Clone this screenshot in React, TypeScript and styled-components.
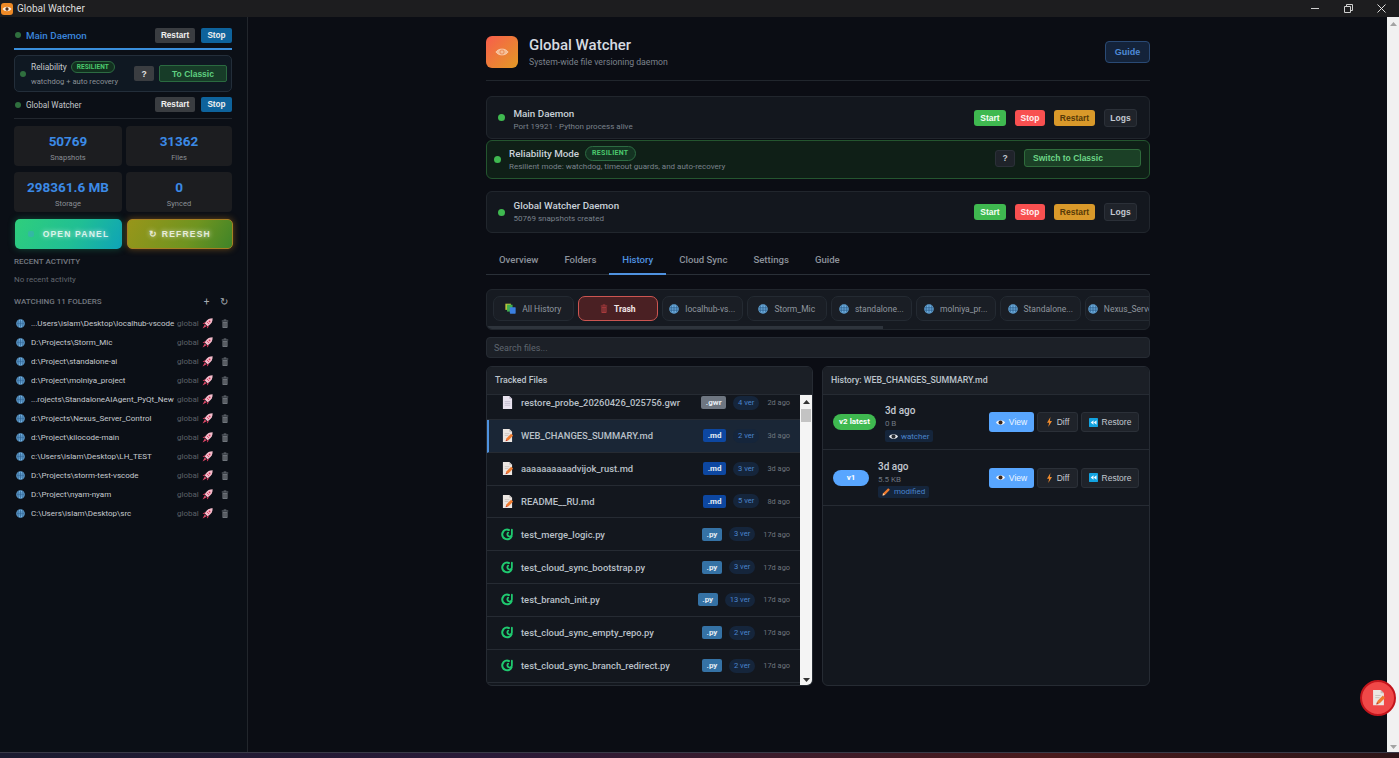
import React from 'react';
import styled, { createGlobalStyle } from 'styled-components';

const UI_FONT = 'Roboto, "Noto Sans", Arial, sans-serif';
const BTN_FONT = '"Liberation Sans", Arial, sans-serif';

const GlobalStyle = createGlobalStyle`
  html, body, #root { margin: 0; height: 100%; }
  body { overflow: hidden; background: #0b0e14; font-family: ${UI_FONT}; color: #c9d1d9; }
  * { box-sizing: border-box; }
`;

const Shell = styled.div`
  height: 758px;
  display: flex;
  flex-direction: column;
`;

const TitleBar = styled.div`
  height: 17px;
  flex: none;
  display: flex;
  align-items: center;
  background: #1d1d1f;
  padding-left: 1px;
`;

const TitleText = styled.span`
  margin-left: 4px;
  font-size: 10px;
  color: #dcdcdc;
`;

const WindowControls = styled.div`
  margin-left: auto;
  margin-right: 2px;
  display: flex;
  align-items: center;
  gap: 1px;
`;

const WindowControl = styled.div`
  width: 32px;
  height: 17px;
  display: flex;
  align-items: center;
  justify-content: center;
`;

const Body = styled.div`
  flex: 1;
  min-height: 0;
  display: flex;
`;

const Sidebar = styled.aside`
  width: 248px;
  flex: none;
  padding: 11px 15px 0 14px;
  background: #0b0f16;
  border-right: 1px solid #22262c;
`;

const DaemonRow = styled.div<{ $active?: boolean }>`
  display: flex;
  align-items: center;
  height: 22px;
  padding-bottom: 6px;
  border-bottom: ${(p) => (p.$active ? '2px solid #3a8fdc' : '1px solid #22272e')};
  margin-bottom: ${(p) => (p.$active ? '5px' : '7px')};
`;

const MiniDot = styled.span`
  width: 6px;
  height: 6px;
  margin-right: 5px;
  margin-left: 1px;
  border-radius: 50%;
  background: #2f6f3e;
  flex: none;
`;

const DaemonName = styled.span<{ $active?: boolean }>`
  padding-top: 1px;
  font-size: ${(p) => (p.$active ? '9.8px' : '8.2px')};
  font-weight: ${(p) => (p.$active ? 500 : 400)};
  color: ${(p) => (p.$active ? '#3a86dd' : '#c4c8cc')};
  margin-right: auto;
`;

const MiniButton = styled.button<{ $primary?: boolean }>`
  height: 15px;
  padding: 0;
  width: ${(p) => (p.$primary ? '31px' : '40px')};
  margin-left: 6px;
  border: none;
  border-radius: 2px;
  background: ${(p) => (p.$primary ? '#0e639c' : '#3a3d41')};
  color: #f0f0f0;
  font: 700 8.2px ${BTN_FONT};
`;

const ReliabilityBox = styled.div`
  height: 37px;
  display: flex;
  align-items: center;
  padding: 0 5px;
  margin-bottom: 5px;
  border: 1px solid #232e3a;
  border-radius: 5px;
  background: #0f1822;
`;

const ReliabilityDot = styled(MiniDot)`
  margin-right: 5px;
  margin-left: 0;
`;

const ReliabilityText = styled.div`
  width: 103px;
  flex: none;
`;

const ReliabilityTitle = styled.div`
  display: flex;
  align-items: center;
  gap: 4px;
  font-size: 8.4px;
  line-height: 13px;
  color: #c4c8cc;
`;

const SmallNote = styled.div`
  margin-top: 2px;
  font-size: 7.6px;
  line-height: 11px;
  color: #8b9097;
  white-space: nowrap;
`;

const TinyPill = styled.span`
  padding: 0 5px;
  height: 12px;
  line-height: 10px;
  border: 1px solid #2c6b42;
  border-radius: 6px;
  background: #12301f;
  color: #4cc96e;
  font-size: 6.5px;
  font-weight: 700;
  letter-spacing: 0.1px;
`;

const HelpMini = styled.button`
  width: 20px;
  height: 15px;
  flex: none;
  padding: 0;
  border: none;
  border-radius: 2px;
  background: #3a3d41;
  color: #e4e4e4;
  font: 700 8.5px ${BTN_FONT};
`;

const ClassicMini = styled.button`
  width: 68px;
  height: 17px;
  flex: none;
  margin-left: 5px;
  padding: 0;
  border: 1px solid #2a6a40;
  border-radius: 2px;
  background: #173c28;
  color: #5fcf80;
  font: 700 8.5px ${BTN_FONT};
`;

const StatGrid = styled.div`
  display: grid;
  grid-template-columns: 108px 106px;
  gap: 6px 4px;
`;

const StatCard = styled.div`
  height: 40px;
  border-radius: 4px;
  background: #1c1d20;
  text-align: center;
  padding-top: 6px;
`;

const StatValue = styled.div`
  font-size: 13.5px;
  line-height: 18px;
  font-weight: 700;
  color: #3b8ae6;
`;

const StatLabel = styled.div`
  font-size: 7.5px;
  line-height: 11px;
  margin-top: 2px;
  color: #8a8e94;
`;

const ActionGrid = styled.div`
  display: grid;
  grid-template-columns: 107px 106px;
  gap: 5px;
  margin: 7px 0 0 1px;
`;

const ActionButton = styled.button<{ $tone: 'open' | 'refresh' }>`
  height: 30px;
  padding: 0;
  display: flex;
  align-items: center;
  justify-content: center;
  gap: 5px;
  border-radius: 5px;
  border: ${(p) => (p.$tone === 'refresh' ? '1px solid #a87f22' : 'none')};
  background: ${(p) =>
    p.$tone === 'open'
      ? 'linear-gradient(120deg, #2fce7c 0%, #20bf94 55%, #0ea3b8 100%)'
      : 'linear-gradient(120deg, #98961a 0%, #6f9420 60%, #3f8428 100%)'};
  box-shadow: ${(p) =>
    p.$tone === 'open' ? '0 0 7px rgba(30, 190, 120, 0.35)' : '0 0 7px rgba(220, 140, 30, 0.45)'};
  color: rgba(255, 255, 255, 0.8);
  font: 700 8.5px ${BTN_FONT};
  letter-spacing: 1.2px;
  text-shadow: 0 0 5px rgba(255, 255, 255, 0.75);
`;

const GhostGlyph = styled.span`
  width: 6px;
  height: 6px;
  border-radius: 2px;
  background: rgba(60, 170, 190, 0.55);
  margin-right: 4px;
`;

const SectionLabel = styled.div`
  margin-top: 7px;
  font-size: 8px;
  line-height: 12px;
  font-weight: 500;
  color: #737880;
`;

const EmptyNote = styled.div`
  margin-top: 6px;
  font-size: 8px;
  line-height: 12px;
  color: #62676e;
`;

const WatchHeader = styled.div`
  display: flex;
  align-items: center;
  margin-top: 10px;
  margin-bottom: 6px;
  height: 12px;
`;

const WatchTitle = styled(SectionLabel)`
  margin: 0 auto 0 0;
`;

const WatchAction = styled.span`
  width: 17px;
  text-align: center;
  font-size: 10px;
  line-height: 12px;
  color: #a6abb1;
`;

const FolderRow = styled.div`
  height: 19px;
  display: flex;
  align-items: center;
  padding-left: 2px;
`;

const FolderPath = styled.span`
  width: 146px;
  flex: none;
  margin-left: 6px;
  font-size: 8px;
  color: #c6cacf;
  white-space: nowrap;
  overflow: hidden;
`;

const FolderScope = styled.span`
  width: 20px;
  flex: none;
  font-size: 8px;
  color: #5c6168;
`;

const FolderAction = styled.span<{ $width: number }>`
  width: ${(p) => p.$width}px;
  flex: none;
  display: flex;
  justify-content: center;
`;

const Main = styled.main`
  flex: 1;
  min-width: 0;
  display: flex;
  justify-content: center;
  padding-top: 19px;
  background: #0b0d14;
`;

const Content = styled.div`
  width: 664px;
  margin-left: 1px;
`;

const Header = styled.header`
  display: flex;
  align-items: center;
  height: 45px;
  padding-bottom: 13px;
  border-bottom: 1px solid #21262d;
  margin-bottom: 15px;
`;

const LogoTile = styled.div`
  width: 32px;
  height: 32px;
  display: flex;
  align-items: center;
  justify-content: center;
  border-radius: 6px;
  background: linear-gradient(135deg, #f85d4c 0%, #e39a25 100%);
`;

const HeaderText = styled.div`
  margin-left: 11px;
  margin-right: auto;
`;

const PageTitle = styled.h1`
  margin: 0;
  font-size: 15px;
  line-height: 20px;
  font-weight: 500;
  color: #d6dae0;
`;

const PageSubtitle = styled.p`
  margin: 1px 0 0;
  font-size: 8.7px;
  line-height: 12px;
  color: #7b828c;
`;

const GuideButton = styled.button`
  width: 45px;
  height: 22px;
  padding: 0;
  border: 1px solid #2a4a75;
  border-radius: 4px;
  background: #14233a;
  color: #4f8ad6;
  font: 700 9px ${BTN_FONT};
`;

const StatusCard = styled.section<{ $height: number; $resilient?: boolean; $gap: number }>`
  height: ${(p) => p.$height}px;
  margin-bottom: ${(p) => p.$gap}px;
  display: flex;
  align-items: center;
  padding: 0 ${(p) => (p.$resilient ? '8px' : '12px')} 0 ${(p) => (p.$resilient ? '7px' : '11px')};
  border: 1px solid ${(p) => (p.$resilient ? '#24552f' : '#21262d')};
  border-radius: 6px;
  background: ${(p) => (p.$resilient ? '#0f1f17' : '#13171e')};
`;

const StatusDot = styled.span`
  width: 7px;
  height: 7px;
  flex: none;
  border-radius: 50%;
  background: #3fb950;
`;

const StatusText = styled.div<{ $resilient?: boolean; $nudge?: number }>`
  margin-left: ${(p) => (p.$resilient ? '8px' : '8.5px')};
  margin-right: auto;
  margin-top: ${(p) => p.$nudge ?? 0}px;
`;

const StatusName = styled.div`
  display: flex;
  align-items: center;
  gap: 6px;
  height: 13px;
  font-size: 9.8px;
  line-height: 13px;
  font-weight: 500;
  color: #c9d1d9;
`;

const StatusNote = styled.div`
  margin-top: 1px;
  font-size: 8px;
  line-height: 11px;
  color: #7a828c;
`;

const ModePill = styled.span`
  height: 15px;
  padding: 0 6px;
  line-height: 13px;
  border: 1px solid #2c6b42;
  border-radius: 8px;
  background: #143322;
  color: #4cc96e;
  font-size: 7px;
  font-weight: 700;
  letter-spacing: 0.3px;
`;

const ControlButton = styled.button<{ $kind: 'start' | 'stop' | 'restart' | 'logs' }>`
  height: ${(p) => (p.$kind === 'logs' ? '18px' : '16px')};
  width: ${(p) => ({ start: 32, stop: 30, restart: 41, logs: 33 }[p.$kind])}px;
  margin-left: 9px;
  padding: 0;
  border-radius: 3px;
  border: ${(p) => (p.$kind === 'logs' ? '1px solid #2b3038' : 'none')};
  background: ${(p) => ({ start: '#3fb950', stop: '#f85050', restart: '#d9992a', logs: '#1f232a' }[p.$kind])};
  color: ${(p) => ({ start: '#f4fff6', stop: '#fff0f0', restart: '#573a08', logs: '#c3c9d1' }[p.$kind])};
  font: 700 8.5px ${BTN_FONT};
`;

const HelpButton = styled.button`
  width: 20px;
  height: 17px;
  margin-right: 9px;
  margin-bottom: 3px;
  padding: 0;
  border: 1px solid #2b3038;
  border-radius: 3px;
  background: #1f232a;
  color: #c3c9d1;
  font: 700 8.5px ${BTN_FONT};
`;

const SwitchButton = styled.button`
  width: 117px;
  height: 18px;
  margin-bottom: 3px;
  padding: 0 0 0 8px;
  text-align: left;
  border: 1px solid #2f6b3c;
  border-radius: 3px;
  background: #1b4026;
  color: #6dd587;
  font: 700 8.5px ${BTN_FONT};
`;

const TabBar = styled.nav`
  display: flex;
  height: 30px;
  margin-bottom: 14px;
  border-bottom: 1px solid #2a3038;
`;

const Tab = styled.div<{ $active?: boolean }>`
  height: 30px;
  padding: 0 13px;
  line-height: 29px;
  font-size: 9.6px;
  font-weight: 500;
  color: ${(p) => (p.$active ? '#4f92e0' : '#8b929b')};
  border-bottom: 2px solid ${(p) => (p.$active ? '#4f92e0' : 'transparent')};
`;

const ChipPanel = styled.div`
  height: 41px;
  padding-top: 6px;
  display: flex;
  flex-direction: column;
  border: 1px solid #21262d;
  border-radius: 6px;
  background: #161a21;
  overflow: hidden;
`;

const ChipRow = styled.div`
  display: flex;
  gap: 4px;
  padding-left: 6px;
  height: 25px;
`;

const Chip = styled.div<{ $danger?: boolean }>`
  width: 80.5px;
  height: 25px;
  flex: none;
  display: flex;
  align-items: center;
  justify-content: center;
  gap: 6px;
  font-size: 8.5px;
  white-space: nowrap;
  font-weight: ${(p) => (p.$danger ? 700 : 400)};
  color: ${(p) => (p.$danger ? '#f0e6e6' : '#8f969f')};
  border: ${(p) => (p.$danger ? '1.5px solid #cc5551' : '1px solid #242a32')};
  border-radius: 7px;
  background: ${(p) => (p.$danger ? '#4a2023' : '#1a1e25')};
`;

const ChipScrollThumb = styled.div`
  width: 396px;
  height: 3px;
  margin-top: auto;
  background: #2e343c;
`;

const SearchInput = styled.input`
  display: block;
  width: 100%;
  height: 21px;
  margin: 7px 0 8px;
  padding: 0 7px;
  border: 1px solid #262b33;
  border-radius: 4px;
  background: #1c2027;
  color: #c9d1d9;
  font: 400 9px ${UI_FONT};
  &::placeholder { color: #5f666f; }
`;

const Panels = styled.div`
  display: grid;
  grid-template-columns: 327px 328px;
  gap: 9px;
  height: 320px;
`;

const Panel = styled.section`
  display: flex;
  flex-direction: column;
  min-height: 0;
  border: 1px solid #262b33;
  border-radius: 6px;
  background: #13171e;
  overflow: hidden;
`;

const PanelHeader = styled.div`
  height: 28px;
  flex: none;
  padding-left: 8px;
  line-height: 27px;
  font-size: 8.8px;
  font-weight: 500;
  color: #bcc3cb;
  background: #1b1f26;
  border-bottom: 1px solid #262b33;
`;

const PanelBody = styled.div`
  flex: 1;
  min-height: 0;
  display: flex;
`;

const FileList = styled.div`
  flex: 1;
  min-width: 0;
  overflow: hidden;
`;

const FileItem = styled.div<{ $selected?: boolean; $first?: boolean }>`
  height: 32.85px;
  margin-top: ${(p) => (p.$first ? '-8px' : '0')};
  display: flex;
  align-items: center;
  padding: 0 10px 0 ${(p) => (p.$selected ? '12px' : '14px')};
  border-left: ${(p) => (p.$selected ? '2px solid #4f92e0' : 'none')};
  border-bottom: 1px solid #262b33;
  background: ${(p) => (p.$selected ? '#1a2636' : 'transparent')};
`;

const FileIconSlot = styled.span`
  width: 12px;
  flex: none;
  display: flex;
  justify-content: center;
`;

const FileName = styled.span`
  margin-left: 8px;
  margin-right: auto;
  font-size: 9.4px;
  font-weight: 500;
  color: #b9c0c8;
  white-space: nowrap;
`;

const ExtBadge = styled.span<{ $ext: string }>`
  height: 13px;
  padding: 0 4.5px;
  line-height: 13px;
  border-radius: 2px;
  font-size: 8px;
  font-weight: 700;
  color: #e6edf3;
  background: ${(p) => (p.$ext === '.gwr' ? '#6e7681' : p.$ext === '.md' ? '#0d47a1' : '#3572a5')};
`;

const VersionPill = styled.span`
  height: 14px;
  margin-left: 7px;
  padding: 0 5px;
  line-height: 14px;
  border-radius: 7px;
  font-size: 7.6px;
  color: #4a84cc;
  background: #15253b;
`;

const FileTime = styled.span`
  margin-left: 8px;
  font-size: 7.4px;
  color: #6f767f;
  white-space: nowrap;
`;

const FakeScrollbar = styled.div<{ $page?: boolean }>`
  width: 12px;
  flex: none;
  display: flex;
  flex-direction: column;
  align-items: center;
  justify-content: space-between;
  background: ${(p) => (p.$page ? '#f1f1f1' : '#f4f4f4')};
  padding: 5px 0 3px;
`;

const ScrollThumb = styled.div`
  width: 10px;
  height: 13px;
  margin-top: 5px;
  margin-bottom: auto;
  background: #c3c3c3;
`;

const VersionRow = styled.div<{ $tall?: boolean }>`
  height: ${(p) => (p.$tall ? 56 : 55)}px;
  display: flex;
  align-items: center;
  padding: 0 10px;
  border-bottom: 1px solid #262b33;
`;

const VersionTag = styled.span<{ $latest?: boolean }>`
  height: 16px;
  padding: 0 6px;
  min-width: 36px;
  line-height: 16px;
  text-align: center;
  flex: none;
  border-radius: 8px;
  font-size: 8px;
  font-weight: 700;
  color: #fff;
  background: ${(p) => (p.$latest ? '#3fb950' : '#58a6ff')};
`;

const VersionMeta = styled.div`
  margin: 2px auto 0 9px;
`;

const VersionTime = styled.div`
  font-size: 10px;
  line-height: 13px;
  font-weight: 500;
  color: #c3c9d1;
`;

const VersionSize = styled.div`
  font-size: 8px;
  line-height: 11px;
  margin-top: 1px;
  color: #6e7681;
`;

const SourceTag = styled.span`
  display: flex;
  width: fit-content;
  align-items: center;
  gap: 3px;
  height: 12px;
  margin-top: 1px;
  padding: 0 4px;
  border-radius: 2px;
  font-size: 8px;
  color: #4a84cc;
  background: #15253b;
`;

const VersionButton = styled.button<{ $primary?: boolean; $width: number }>`
  width: ${(p) => p.$width}px;
  height: 20px;
  margin-left: 3px;
  padding: 0;
  display: inline-flex;
  align-items: center;
  justify-content: center;
  gap: 4px;
  border: ${(p) => (p.$primary ? 'none' : '1px solid #2b3038')};
  border-radius: 3px;
  background: ${(p) => (p.$primary ? '#58a6ff' : '#1f232a')};
  color: ${(p) => (p.$primary ? '#eef6ff' : '#c3c9d1')};
  font: 400 8.5px ${BTN_FONT};
`;

const FloatingButton = styled.button`
  position: absolute;
  left: 1360px;
  top: 680px;
  width: 36px;
  height: 36px;
  padding: 0;
  display: flex;
  align-items: center;
  justify-content: center;
  border: 2px solid #c3151c;
  border-radius: 50%;
  background: #f04848;
`;

const DesktopStrip = styled.div`
  height: 6px;
  flex: none;
  background: linear-gradient(90deg, #1b1b30 0%, #2a1a38 35%, #3c1c2c 55%, #4a1a1c 75%, #2d1518 100%);
  border-top: 1px solid #3a3a48;
`;

const GlobeIcon = ({ size = 9 }: { size?: number }) => (
  <svg width={size} height={size} viewBox="0 0 16 16" style={{ flex: 'none' }}>
    <circle cx="8" cy="8" r="7.6" fill="#72b2e2" />
    <path d="M1 5.4h14M0.6 8h14.8M1 10.6h14M8 .5v15M5 1c-2 4-2 10 0 14M11 1c2 4 2 10 0 14" stroke="#2b5d8c" strokeWidth="1.1" fill="none" />
  </svg>
);

const RocketIcon = () => (
  <svg width="11" height="11" viewBox="0 0 16 16">
    <path d="M15.5.5c-4.5 0-7.7 1.6-10.1 5L4 8l4 4 2.5-1.4C14 8.2 15.5 5 15.5.5z" fill="#f4bccb" />
    <path d="M4.5 6 .8 8l3 1.2zM10 11.5 8 15.2l-1.2-3z" fill="#d8385a" />
    <path d="M4 9.5 .8 15.2l5.700-3.2z" fill="#e5486a" />
    <path d="M7 5.5l3.500 3.500" stroke="#e0486a" strokeWidth="1.4" />
    <circle cx="11" cy="5" r="1.3" fill="#d8385a" />
  </svg>
);

const TrashIcon = ({ color = '#6f747b' }: { color?: string }) => (
  <svg width="8" height="9" viewBox="0 0 12 14">
    <path d="M1 2.2h10v1.6H1zM4 .6h4v1.4H4z" fill={color} />
    <path d="M2 4.6h8V13a1 1 0 0 1-1 1H3a1 1 0 0 1-1-1z" fill={color} />
    <path d="M4.4 6v6.4M7.6 6v6.4" stroke="#1a1c20" strokeWidth=".8" />
  </svg>
);

const StackIcon = () => (
  <svg width="11" height="11" viewBox="0 0 16 16" style={{ flex: 'none' }}>
    <rect x="0.5" y="1" width="8" height="9" fill="#b7c23a" />
    <rect x="3" y="2.5" width="8" height="10" fill="#3fae4f" />
    <rect x="7" y="6" width="8.5" height="9.5" rx="1" fill="#3a7fe0" />
  </svg>
);

const PlainFileIcon = () => (
  <svg width="11" height="13" viewBox="0 0 12 14">
    <path d="M1 0h7l3 3v11H1z" fill="#e8e2ee" />
    <path d="M8 0v3h3z" fill="#b9b3c4" />
    <path d="M3 6h6M3 8h6M3 10h6" stroke="#bcb6c8" strokeWidth=".8" />
  </svg>
);

const MarkdownFileIcon = ({ size = 11 }: { size?: number }) => (
  <svg width={size} height={size * 1.18} viewBox="0 0 12 14">
    <path d="M1 0h7l3 3v11H1z" fill="#ece6e2" />
    <path d="M8 0v3h3z" fill="#c4bdb8" />
    <path d="M3 5h5M3 7h4" stroke="#c4bdb8" strokeWidth=".8" />
    <path d="M4.5 12.5 5 10l5-5 2.2 2.2-5 5z" fill="#ef7b2f" />
    <path d="M3.8 13.4 4.6 11l1.8 1.8z" fill="#c9412c" />
  </svg>
);

const SnakeIcon = () => (
  <svg width="13" height="13" viewBox="0 0 16 16" fill="none">
    <path d="M10.5 2A6.4 6.4 0 1 0 14 10.5" stroke="#1fc96f" strokeWidth="2.8" strokeLinecap="round" />
    <path d="M14.5 1.5V8A3 3 0 1 1 9.5 5.5" stroke="#1fc96f" strokeWidth="2.4" strokeLinecap="round" />
  </svg>
);

const EyeIcon = ({ ball = '#3b2415', white = '#f2f4f7' }: { ball?: string; white?: string }) => (
  <svg width="9" height="9" viewBox="0 0 16 16">
    <path d="M0 8c3-5.4 13-5.4 16 0-3 5.4-13 5.4-16 0z" fill={white} />
    <circle cx="8" cy="8" r="3.6" fill={ball} />
  </svg>
);

const BoltIcon = () => (
  <svg width="7" height="10" viewBox="0 0 10 16">
    <path d="M6.5 0 1 9h3.4L3 16l6-9.6H5.6z" fill="#ee8a2d" />
  </svg>
);

const RestoreIcon = () => (
  <svg width="9" height="9" viewBox="0 0 16 16">
    <rect width="16" height="16" rx="1.5" fill="#12a3e0" />
    <path d="M8 4 3 8l5 4zM13.4 4l-5 4 5 4z" fill="#eef8ff" />
  </svg>
);

const PencilIcon = () => (
  <svg width="9" height="9" viewBox="0 0 16 16">
    <path d="M2 11 11 2l3 3-9 9-4 1z" fill="#ef7b2f" />
    <path d="M2 11l3 3-4 1z" fill="#f5d9b5" />
  </svg>
);

const AppGlyph = () => (
  <svg width="12" height="12" viewBox="0 0 16 16">
    <rect width="16" height="16" rx="4" fill="#ef8a26" />
    <path d="M2 8c3-4 9-4 12 0-3 4-9 4-12 0z" fill="#fff2e2" />
    <circle cx="8" cy="8" r="2.2" fill="#53301a" />
  </svg>
);

const LogoEye = () => (
  <svg width="14" height="10" viewBox="0 0 16 11" fill="none">
    <path d="M1 5.5C4 1 12 1 15 5.5 12 10 4 10 1 5.5z" fill="#f7c9a6" fillOpacity=".85" stroke="#fbd9bf" strokeWidth=".8" />
    <circle cx="8" cy="5.5" r="2.4" stroke="#e9844a" strokeWidth="1" />
  </svg>
);

const Arrow = ({ up, color }: { up?: boolean; color: string }) => (
  <svg width="7" height="4" viewBox="0 0 7 4">
    <path d={up ? 'M3.5 0 7 4H0z' : 'M0 0h7L3.5 4z'} fill={color} />
  </svg>
);

const folders = [
  '...Users\\islam\\Desktop\\localhub-vscode',
  'D:\\Projects\\Storm_Mic',
  'd:\\Project\\standalone-ai',
  'd:\\Project\\molniya_project',
  '...rojects\\StandaloneAIAgent_PyQt_New',
  'd:\\Projects\\Nexus_Server_Control',
  'd:\\Project\\kilocode-main',
  'c:\\Users\\islam\\Desktop\\LH_TEST',
  'D:\\Projects\\storm-test-vscode',
  'D:\\Project\\nyam-nyam',
  'C:\\Users\\islam\\Desktop\\src',
];

const chips = ['localhub-vs...', 'Storm_Mic', 'standalone...', 'molniya_pr...', 'Standalone...', 'Nexus_Server...'];

const files = [
  { name: 'restore_probe_20260426_025756.gwr', ext: '.gwr', ver: '4 ver', time: '2d ago' },
  { name: 'WEB_CHANGES_SUMMARY.md', ext: '.md', ver: '2 ver', time: '3d ago', selected: true },
  { name: 'aaaaaaaaaadvijok_rust.md', ext: '.md', ver: '3 ver', time: '3d ago' },
  { name: 'README__RU.md', ext: '.md', ver: '5 ver', time: '8d ago' },
  { name: 'test_merge_logic.py', ext: '.py', ver: '3 ver', time: '17d ago' },
  { name: 'test_cloud_sync_bootstrap.py', ext: '.py', ver: '3 ver', time: '17d ago' },
  { name: 'test_branch_init.py', ext: '.py', ver: '13 ver', time: '17d ago' },
  { name: 'test_cloud_sync_empty_repo.py', ext: '.py', ver: '2 ver', time: '17d ago' },
  { name: 'test_cloud_sync_branch_redirect.py', ext: '.py', ver: '2 ver', time: '17d ago' },
];

const stats = [
  ['50769', 'Snapshots'],
  ['31362', 'Files'],
  ['298361.6 MB', 'Storage'],
  ['0', 'Synced'],
];

const tabs = ['Overview', 'Folders', 'History', 'Cloud Sync', 'Settings', 'Guide'];

const fileIcon = (ext: string) => {
  if (ext === '.gwr') return <PlainFileIcon />;
  if (ext === '.md') return <MarkdownFileIcon />;
  return <SnakeIcon />;
};

const Controls = () => (
  <>
    <ControlButton $kind="start">Start</ControlButton>
    <ControlButton $kind="stop">Stop</ControlButton>
    <ControlButton $kind="restart">Restart</ControlButton>
    <ControlButton $kind="logs">Logs</ControlButton>
  </>
);

const VersionActions = () => (
  <>
    <VersionButton $primary $width={45}><EyeIcon />View</VersionButton>
    <VersionButton $width={41}><BoltIcon />Diff</VersionButton>
    <VersionButton $width={58}><RestoreIcon />Restore</VersionButton>
  </>
);

const App: React.FC = () => {
  return (
    <Shell>
      <GlobalStyle />
      <TitleBar>
        <AppGlyph />
        <TitleText>Global Watcher</TitleText>
        <WindowControls>
          <WindowControl>
            <svg width="8" height="9" viewBox="0 0 8 9"><path d="M0 4.5h8" stroke="#cfcfcf" /></svg>
          </WindowControl>
          <WindowControl>
            <svg width="9" height="9" viewBox="0 0 9 9" fill="none"><path d="M.5 2.5h6v6h-6zM2.5 2V.5h6v6H7" stroke="#cfcfcf" /></svg>
          </WindowControl>
          <WindowControl>
            <svg width="9" height="9" viewBox="0 0 9 9"><path d="M.5.5l8 8M8.5.5l-8 8" stroke="#dedede" /></svg>
          </WindowControl>
        </WindowControls>
      </TitleBar>

      <Body>
        <Sidebar>
          <DaemonRow $active>
            <MiniDot />
            <DaemonName $active>Main Daemon</DaemonName>
            <MiniButton>Restart</MiniButton>
            <MiniButton $primary>Stop</MiniButton>
          </DaemonRow>
          <ReliabilityBox>
            <ReliabilityDot />
            <ReliabilityText>
              <ReliabilityTitle>Reliability <TinyPill>RESILIENT</TinyPill></ReliabilityTitle>
              <SmallNote>watchdog + auto recovery</SmallNote>
            </ReliabilityText>
            <HelpMini>?</HelpMini>
            <ClassicMini>To Classic</ClassicMini>
          </ReliabilityBox>
          <DaemonRow>
            <MiniDot />
            <DaemonName>Global Watcher</DaemonName>
            <MiniButton>Restart</MiniButton>
            <MiniButton $primary>Stop</MiniButton>
          </DaemonRow>
          <StatGrid>
            {stats.map(([value, label]) => (
              <StatCard key={label}>
                <StatValue>{value}</StatValue>
                <StatLabel>{label}</StatLabel>
              </StatCard>
            ))}
          </StatGrid>
          <ActionGrid>
            <ActionButton $tone="open"><GhostGlyph />OPEN PANEL</ActionButton>
            <ActionButton $tone="refresh">↻ REFRESH</ActionButton>
          </ActionGrid>
          <SectionLabel>RECENT ACTIVITY</SectionLabel>
          <EmptyNote>No recent activity</EmptyNote>
          <WatchHeader>
            <WatchTitle>WATCHING 11 FOLDERS</WatchTitle>
            <WatchAction>+</WatchAction>
            <WatchAction>↻</WatchAction>
          </WatchHeader>
          {folders.map((path) => (
            <FolderRow key={path}>
              <GlobeIcon />
              <FolderPath>{path}</FolderPath>
              <FolderScope>global</FolderScope>
              <FolderAction $width={20}><RocketIcon /></FolderAction>
              <FolderAction $width={16}><TrashIcon /></FolderAction>
            </FolderRow>
          ))}
        </Sidebar>

        <Main>
          <Content>
            <Header>
              <LogoTile><LogoEye /></LogoTile>
              <HeaderText>
                <PageTitle>Global Watcher</PageTitle>
                <PageSubtitle>System-wide file versioning daemon</PageSubtitle>
              </HeaderText>
              <GuideButton>Guide</GuideButton>
            </Header>

            <StatusCard $height={43} $gap={1}>
              <StatusDot />
              <StatusText $nudge={3}>
                <StatusName>Main Daemon</StatusName>
                <StatusNote>Port 19921 · Python process alive</StatusNote>
              </StatusText>
              <Controls />
            </StatusCard>
            <StatusCard $height={39} $gap={12} $resilient>
              <StatusDot />
              <StatusText $resilient $nudge={-1}>
                <StatusName>Reliability Mode <ModePill>RESILIENT</ModePill></StatusName>
                <StatusNote>Resilient mode: watchdog, timeout guards, and auto-recovery</StatusNote>
              </StatusText>
              <HelpButton>?</HelpButton>
              <SwitchButton>Switch to Classic</SwitchButton>
            </StatusCard>
            <StatusCard $height={42} $gap={12}>
              <StatusDot />
              <StatusText $nudge={-1}>
                <StatusName>Global Watcher Daemon</StatusName>
                <StatusNote>50769 snapshots created</StatusNote>
              </StatusText>
              <Controls />
            </StatusCard>

            <TabBar>
              {tabs.map((tab) => (
                <Tab key={tab} $active={tab === 'History'}>{tab}</Tab>
              ))}
            </TabBar>

            <ChipPanel>
              <ChipRow>
                <Chip><StackIcon />All History</Chip>
                <Chip $danger><TrashIcon color="#a83a3c" />Trash</Chip>
                {chips.map((chip) => (
                  <Chip key={chip}><GlobeIcon size={10} />{chip}</Chip>
                ))}
              </ChipRow>
              <ChipScrollThumb />
            </ChipPanel>

            <SearchInput placeholder="Search files..." readOnly />

            <Panels>
              <Panel>
                <PanelHeader>Tracked Files</PanelHeader>
                <PanelBody>
                  <FileList>
                    {files.map((file, index) => (
                      <FileItem key={file.name} $selected={file.selected} $first={index === 0}>
                        <FileIconSlot>{fileIcon(file.ext)}</FileIconSlot>
                        <FileName>{file.name}</FileName>
                        <ExtBadge $ext={file.ext}>{file.ext}</ExtBadge>
                        <VersionPill>{file.ver}</VersionPill>
                        <FileTime>{file.time}</FileTime>
                      </FileItem>
                    ))}
                  </FileList>
                  <FakeScrollbar>
                    <Arrow up color="#333" />
                    <ScrollThumb />
                    <Arrow color="#333" />
                  </FakeScrollbar>
                </PanelBody>
              </Panel>

              <Panel>
                <PanelHeader>History: WEB_CHANGES_SUMMARY.md</PanelHeader>
                <VersionRow>
                  <VersionTag $latest>v2 latest</VersionTag>
                  <VersionMeta>
                    <VersionTime>3d ago</VersionTime>
                    <VersionSize>0 B</VersionSize>
                    <SourceTag><EyeIcon ball="#2a2f36" white="#e6e9ee" />watcher</SourceTag>
                  </VersionMeta>
                  <VersionActions />
                </VersionRow>
                <VersionRow $tall>
                  <VersionTag>v1</VersionTag>
                  <VersionMeta>
                    <VersionTime>3d ago</VersionTime>
                    <VersionSize>5.5 KB</VersionSize>
                    <SourceTag><PencilIcon />modified</SourceTag>
                  </VersionMeta>
                  <VersionActions />
                </VersionRow>
              </Panel>
            </Panels>
          </Content>
        </Main>

        <FakeScrollbar $page>
          <Arrow up color="#a3a3a3" />
          <Arrow color="#a3a3a3" />
        </FakeScrollbar>
      </Body>

      <DesktopStrip />

      <FloatingButton><MarkdownFileIcon size={13} /></FloatingButton>
    </Shell>
  );
};

export default App;
